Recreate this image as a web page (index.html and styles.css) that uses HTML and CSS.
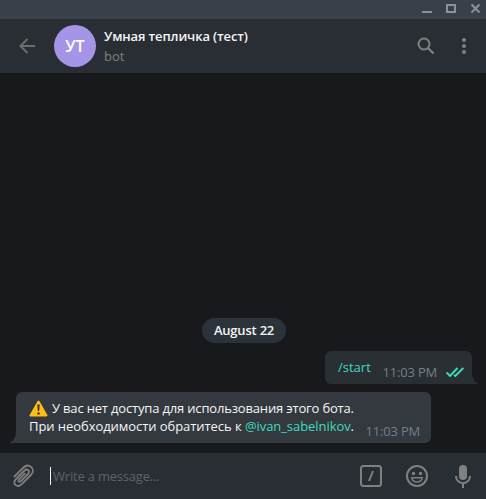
FILE: index.html
```html
<!DOCTYPE html>
<html lang="ru">
<head>
<meta charset="utf-8">
<title>Умная тепличка (тест)</title>
<link rel="stylesheet" href="styles.css">
</head>
<body>
<div class="window">
  <div class="titlebar">
    <svg width="62" height="19" viewBox="0 0 62 19" fill="none" stroke="#8b9198" stroke-width="2">
      <path d="M0 12H10"/>
      <rect x="25" y="5" width="8" height="7"/>
      <path d="M49.500 4.500L57.500 12.500M57.500 4.500L49.500 12.500"/>
    </svg>
  </div>
  <header class="header">
    <svg class="back" width="16" height="16" viewBox="0 0 16 16" fill="none" stroke="#6b6d6e" stroke-width="2">
      <path d="M16 8H1.500M8.500 1L1.500 8L8.500 15"/>
    </svg>
    <div class="avatar">УТ</div>
    <div class="peer">
      <div class="name">Умная тепличка (тест)</div>
      <div class="status">bot</div>
    </div>
    <svg class="search" width="18" height="18" viewBox="0 0 18 18" fill="none" stroke="#808080" stroke-width="2">
      <circle cx="7" cy="7" r="5.500"/><path d="M11 11L16.500 16.500" stroke-width="2.400"/>
    </svg>
    <svg class="more" width="4" height="16" viewBox="0 0 4 16" fill="#808080">
      <circle cx="2" cy="2" r="2"/><circle cx="2" cy="8" r="2"/><circle cx="2" cy="14" r="2"/>
    </svg>
  </header>
  <main class="chat">
    <div class="date">August 22</div>
    <div class="bubble out">
      <span class="command">/start</span>
      <span class="time">11:03 PM</span>
      <svg class="checks" width="18" height="10" viewBox="0 0 18 10" fill="none" stroke="#3ddcbe" stroke-width="1.900">
        <path d="M0.600 5.500L4 9L11.500 1M8 8L9.300 9L17.300 1"/>
      </svg>
      <svg class="tail" width="6" height="12" viewBox="0 0 6 12"><path d="M0 0C0 6 2 9.500 6 11.500V12H0Z" fill="#2a2f33"/></svg>
    </div>
    <div class="bubble in">
      <div class="text">
        <div class="line first"><svg class="warning" width="19" height="17" viewBox="0 0 19 17"><path d="M9.500 1.500L17.500 15.500H1.500Z" fill="#fdbe16" stroke="#fdbe16" stroke-width="2" stroke-linejoin="round"/><path d="M8.300 4.500H10.700L10.200 11H8.800Z" fill="#3b3525"/><circle cx="9.500" cy="13.500" r="1.300" fill="#3b3525"/></svg><span>У вас нет доступа для использования этого бота.</span></div>
        <div class="line second"><span>При необходимости обратитесь к <span class="mention">@ivan_sabelnikov</span>.</span></div>
      </div>
      <span class="time">11:03 PM</span>
      <svg class="tail" width="6" height="12" viewBox="0 0 6 12"><path d="M6 0C6 6 4 9.500 0 11.500V12H6Z" fill="#33393f"/></svg>
    </div>
  </main>
  <footer class="composer">
    <svg class="attach" width="22" height="24" viewBox="0 0 22 24" fill="none" stroke="#808080" stroke-width="1.800" stroke-linecap="round" stroke-linejoin="round">
      <path d="M1.500 12.500L10.500 3.500C16 -1.500 23 5 18.300 10.500L8.500 20.300C4 24.500 -1.200 19.500 3 15L11.500 6.500C14.500 4 17.500 7 15 10L7.900 17.200C6.200 18.600 4.600 17 6 15.400L11.700 9.700"/>
    </svg>
    <div class="field">Write a message...</div>
    <svg class="slash" width="22" height="22" viewBox="0 0 22 22" fill="none" stroke="#808080" stroke-width="2">
      <rect x="1" y="1" width="20" height="20" rx="2.500"/><path d="M13 6L9 16"/>
    </svg>
    <svg class="emoji" width="22" height="22" viewBox="0 0 22 22" fill="none" stroke="#808080" stroke-width="2">
      <circle cx="11" cy="11" r="10"/>
      <circle cx="7.500" cy="8.500" r="1.700" fill="#808080" stroke="none"/><circle cx="14.500" cy="8.500" r="1.700" fill="#808080" stroke="none"/>
      <path d="M5.700 12.700H16.300C15.300 18.500 6.700 18.500 5.700 12.700Z" stroke-width="1.500"/>
    </svg>
    <svg class="mic" width="16" height="23" viewBox="0 0 16 23" fill="none" stroke="#808080" stroke-width="2">
      <rect x="4" y="0" width="8" height="15" rx="4" fill="#808080" stroke="none"/>
      <path d="M1 11C1 20.500 15 20.500 15 11M8 18V23"/>
    </svg>
  </footer>
</div>
</body>
</html>
```

FILE: styles.css
```css
* { box-sizing: border-box; }
body {
  margin: 0;
  background: #18191d;
  font: 13px/18px "Open Sans", sans-serif;
  color: #f5f5f5;
  overflow: hidden;
}
svg { display: block; flex: none; }
.window { display: flex; flex-direction: column; height: 499px; }
.titlebar {
  display: flex;
  justify-content: flex-end;
  height: 19px;
  padding-right: 2px;
  background: #3a4047;
}
.header {
  display: flex;
  align-items: center;
  height: 54px;
  padding: 0 20px 0 19px;
  background: #282e33;
}
.avatar {
  width: 42px;
  height: 42px;
  margin: 0 8px 0 19px;
  border-radius: 50%;
  background: #a695e7;
  color: #fff;
  font-size: 16px;
  font-weight: 600;
  line-height: 42px;
  text-align: center;
}
.peer { flex: 1; white-space: nowrap; }
.name { font-weight: 600; line-height: 20px; letter-spacing: -0.13px; }
.status { color: #808080; line-height: 20px; }
.search { margin-right: 27px; }
.chat {
  display: flex;
  flex: 1;
  flex-direction: column;
  justify-content: flex-end;
  padding: 0 14px 10px 16px;
}
.date {
  align-self: center;
  width: 84px;
  height: 25px;
  margin-bottom: 8px;
  border-radius: 13px;
  background: #2c3239;
  font-weight: 600;
  line-height: 25px;
  letter-spacing: -0.2px;
  text-align: center;
}
.bubble {
  position: relative;
  display: flex;
  white-space: nowrap;
}
.out {
  align-self: flex-end;
  width: 147px;
  height: 33px;
  margin-bottom: 8px;
  padding: 7px 8px 0 13px;
  border-radius: 6px 6px 0 6px;
  background: #2a2f33;
}
.in {
  width: 415px;
  height: 51px;
  padding: 7px 11px 0 13px;
  border-radius: 6px 6px 6px 0;
  background: #33393f;
}
.command, .mention { color: #3ddcbe; }
.time { margin-left: auto; color: #737f87; letter-spacing: -0.2px; }
.out .time { margin-top: 5px; }
.in .time { margin-top: 23px; }
.checks { margin: 9px 0 0 9px; }
.line { display: flex; height: 18px; }
.first { letter-spacing: -0.17px; }
.second { letter-spacing: -0.06px; }
.warning { margin: 1px 4px 0 0; }
.tail { position: absolute; bottom: 0; }
.out .tail { left: 100%; }
.in .tail { right: 100%; }
.composer {
  display: flex;
  align-items: center;
  height: 46px;
  padding: 0 15px 0 13px;
  background: #282e33;
}
.field {
  flex: 1;
  height: 18px;
  margin-left: 15px;
  padding-left: 2px;
  border-left: 1px solid #fff;
  color: #5e6367;
  letter-spacing: -0.2px;
}
.emoji { margin: 0 27px 0 24px; }
```
